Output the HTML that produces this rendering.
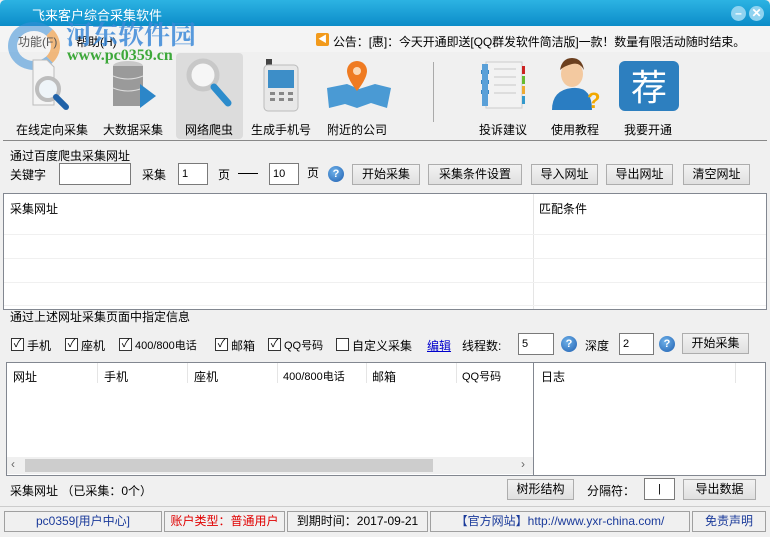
<!DOCTYPE html>
<html><head><meta charset="utf-8"><style>
*{margin:0;padding:0;box-sizing:border-box}
body{width:770px;height:537px;overflow:hidden;background:#f0f0f0;font-family:"Liberation Sans","Noto Sans CJK SC",sans-serif;font-size:12px;color:#000;position:relative}
.a{position:absolute;white-space:nowrap}
.btn{position:absolute;border:1px solid #adadad;background:linear-gradient(#f2f2f2,#e0e0e0);text-align:center;line-height:19px;height:21px;font-size:12px}
.inp{position:absolute;border:1px solid #7a7a7a;background:#fff;height:22px;line-height:20px;padding-left:3px;font-size:11px}
.q{position:absolute;width:16px;height:16px;border-radius:50%;background:radial-gradient(circle at 40% 35%,#6fb2ea,#1f5fb0);color:#fff;font-weight:bold;font-size:11px;text-align:center;line-height:16px}
.cb{position:absolute;width:13px;height:13px;border:1px solid #333;background:#fff;font-size:11px;line-height:11px;text-align:center}
.lbl{position:absolute;font-size:12px;text-align:center;width:90px}
.hl{position:absolute;height:1px;background:#f0f0f0}
.vl{position:absolute;width:1px;background:#e5e5e5}
.ft{position:absolute;top:511px;height:21px;border:1px solid #a0a0a0;background:#f0f0f0;line-height:19px;text-align:center;font-size:12px}
</style></head><body>
<div class="a" style="left:0;top:0;width:770px;height:26px;background:linear-gradient(#2cb3e3,#0c8cc8);border-radius:5px 5px 0 0"></div>
<div class="a" style="left:32px;top:5px;color:#fff;font-size:13px">飞来客户综合采集软件</div>
<div class="a" style="left:731px;top:6px;width:15px;height:15px;border-radius:50%;background:#8fd3f0;color:#fff;font-weight:bold;text-align:center;line-height:14px">–</div>
<div class="a" style="left:749px;top:6px;width:15px;height:15px;border-radius:50%;background:#8fd3f0;color:#fff;font-weight:bold;text-align:center;line-height:15px;font-size:12px">✕</div>
<div class="a" style="left:0;top:26px;width:770px;height:26px;background:#f4f4f4"></div>
<div class="a" style="left:8px;top:22px;width:52px;height:48px;border-radius:50%;border:9px solid #3a8fd8;border-right-color:#f08a1c;opacity:.55"></div>
<div class="a" style="left:18px;top:33px;color:#555">功能(F)</div>
<div class="a" style="left:76px;top:33px">帮助(H)</div>
<div class="a" style="left:66px;top:15px;font-size:26px;font-weight:bold;color:#3c8ad8;opacity:.85;font-family:'Liberation Serif','Noto Serif CJK SC',serif">河东软件园</div>
<div class="a" style="left:67px;top:47px;font-size:16px;font-weight:bold;color:#3da83a;font-family:'Liberation Serif',serif">www.pc0359.cn</div>
<div class="a" style="left:316px;top:33px;width:13px;height:13px;background:#f29a1b;border-radius:2px;color:#fff;font-size:9px;line-height:13px;text-align:center">◀</div>
<div class="a" style="left:333px;top:33px;font-size:12px;letter-spacing:-0.1px">公告：[惠]：今天开通即送[QQ群发软件简洁版]一款！数量有限活动随时结束。</div>
<div class="a" style="left:176px;top:53px;width:67px;height:86px;background:#dcdcdc;border-radius:4px"></div>
<div class="a" style="left:3px;top:140px;width:764px;height:1px;background:#888"></div>
<svg class="a" style="left:0;top:52px" width="770" height="70">
<path d="M33 8h14l7 7v38h-21z" fill="#f4f4f4" stroke="#bbb"/><circle cx="48" cy="37" r="11" fill="#eef4f8" stroke="#bdbdbd" stroke-width="4"/><path d="M56 45l10 10" stroke="#1f62a8" stroke-width="6" stroke-linecap="round"/>
<ellipse cx="128" cy="14" rx="15" ry="5" fill="#c8c8c8"/><rect x="113" y="14" width="30" height="40" fill="#9a9a9a"/><path d="M113 24q15 6 30 0M113 36q15 6 30 0" stroke="#ddd" fill="none"/><path d="M140 32l16 12-16 12z" fill="#2c86c8"/>
<circle cx="203" cy="23" r="14" fill="#f6f6f6" stroke="#c8c8c8" stroke-width="5"/><path d="M214 35l14 16" stroke="#2c8ccc" stroke-width="7" stroke-linecap="round"/>
<rect x="266" y="7" width="6" height="6" fill="#444"/><rect x="264" y="13" width="34" height="46" rx="4" fill="#e8e8e8" stroke="#bbb"/><rect x="268" y="18" width="26" height="18" fill="#3d8ec8"/><g fill="#888"><rect x="270" y="40" width="5" height="3"/><rect x="279" y="40" width="5" height="3"/><rect x="288" y="40" width="5" height="3"/><rect x="270" y="46" width="5" height="3"/><rect x="279" y="46" width="5" height="3"/><rect x="288" y="46" width="5" height="3"/></g>
<path d="M327 36l20-4 12 5 16-5 16 4-4 20-16-5-14 5-12-4-16 4z" fill="#4a9ad4"/><path d="M357 9a10 10 0 0 1 10 10c0 8-10 20-10 20s-10-12-10-20a10 10 0 0 1 10-10z" fill="#ef7b22"/><circle cx="357" cy="19" r="4" fill="#fbd9b6"/>
<rect x="433" y="10" width="1" height="70" fill="#aaa"/>
<rect x="486" y="10" width="36" height="46" fill="#f2f2f2" stroke="#ccc"/><g fill="#3a87c4"><rect x="481" y="18" width="8" height="4"/><rect x="481" y="28" width="8" height="4"/><rect x="481" y="38" width="8" height="4"/></g><rect x="482" y="12" width="6" height="42" fill="#5aa0d8"/><g fill="#ddd"><rect x="494" y="16" width="22" height="2"/><rect x="494" y="24" width="22" height="2"/><rect x="494" y="32" width="22" height="2"/><rect x="494" y="40" width="22" height="2"/></g><rect x="522" y="14" width="3" height="8" fill="#c22"/><rect x="522" y="24" width="3" height="8" fill="#6b3"/><rect x="522" y="34" width="3" height="8" fill="#ea3"/><rect x="522" y="44" width="3" height="8" fill="#39c"/>
<ellipse cx="572" cy="22" rx="11" ry="13" fill="#f3c9a0"/><path d="M560 18q2-12 12-12t12 12q-4-8-12-6t-12 6z" fill="#6b3f1e"/><path d="M552 58q0-20 20-22t20 22z" fill="#2a7dc2"/><text x="587" y="56" font-size="22" font-weight="bold" fill="#f2a900" font-family="Liberation Sans">?</text>
<rect x="619" y="9" width="60" height="50" rx="6" fill="#2d7fbf"/><text x="649" y="48" font-size="36" fill="#fff" text-anchor="middle" font-family="Noto Sans CJK SC">荐</text>
</svg>
<div class="lbl" style="left:7px;top:121px">在线定向采集</div>
<div class="lbl" style="left:88px;top:121px">大数据采集</div>
<div class="lbl" style="left:164px;top:121px">网络爬虫</div>
<div class="lbl" style="left:236px;top:121px">生成手机号</div>
<div class="lbl" style="left:312px;top:121px">附近的公司</div>
<div class="lbl" style="left:458px;top:121px">投诉建议</div>
<div class="lbl" style="left:530px;top:121px">使用教程</div>
<div class="lbl" style="left:603px;top:121px">我要开通</div>
<div class="a" style="left:10px;top:147px">通过百度爬虫采集网址</div>
<div class="a" style="left:10px;top:166px">关键字</div>
<div class="inp" style="left:59px;top:163px;width:72px"></div>
<div class="a" style="left:142px;top:166px">采集</div>
<div class="inp" style="left:178px;top:163px;width:30px">1</div>
<div class="a" style="left:218px;top:166px">页</div>
<div class="a" style="left:238px;top:173px;width:20px;height:1px;background:#000"></div>
<div class="inp" style="left:269px;top:163px;width:30px">10</div>
<div class="a" style="left:307px;top:164px">页</div>
<div class="q" style="left:328px;top:166px">?</div>
<div class="btn" style="left:352px;top:164px;width:68px">开始采集</div>
<div class="btn" style="left:428px;top:164px;width:94px">采集条件设置</div>
<div class="btn" style="left:531px;top:164px;width:67px">导入网址</div>
<div class="btn" style="left:606px;top:164px;width:67px">导出网址</div>
<div class="btn" style="left:683px;top:164px;width:67px">清空网址</div>
<div class="a" style="left:3px;top:193px;width:764px;height:117px;background:#fff;border:1px solid #828790"></div>
<div class="a" style="left:10px;top:200px">采集网址</div>
<div class="a" style="left:539px;top:200px">匹配条件</div>
<div class="vl" style="left:533px;top:194px;height:115px"></div>
<div class="hl" style="left:4px;top:234px;width:762px"></div>
<div class="hl" style="left:4px;top:258px;width:762px"></div>
<div class="hl" style="left:4px;top:282px;width:762px"></div>
<div class="hl" style="left:4px;top:305px;width:762px"></div>
<div class="a" style="left:10px;top:308px">通过上述网址采集页面中指定信息</div>
<div class="cb" style="left:11px;top:338px">✓</div><div class="a" style="left:27px;top:337px">手机</div>
<div class="cb" style="left:65px;top:338px">✓</div><div class="a" style="left:81px;top:337px">座机</div>
<div class="cb" style="left:119px;top:338px">✓</div><div class="a" style="left:135px;top:337px;font-size:11px">400/800电话</div>
<div class="cb" style="left:215px;top:338px">✓</div><div class="a" style="left:231px;top:337px">邮箱</div>
<div class="cb" style="left:268px;top:338px">✓</div><div class="a" style="left:284px;top:337px;font-size:11px">QQ号码</div>
<div class="cb" style="left:336px;top:338px"></div><div class="a" style="left:352px;top:337px">自定义采集</div>
<div class="a" style="left:427px;top:337px;color:#00c;text-decoration:underline">编辑</div>
<div class="a" style="left:462px;top:337px">线程数:</div>
<div class="inp" style="left:518px;top:333px;width:36px">5</div>
<div class="q" style="left:561px;top:336px">?</div>
<div class="a" style="left:585px;top:337px">深度</div>
<div class="inp" style="left:619px;top:333px;width:35px">2</div>
<div class="q" style="left:659px;top:336px">?</div>
<div class="btn" style="left:682px;top:333px;width:67px">开始采集</div>
<div class="a" style="left:6px;top:362px;width:528px;height:114px;background:#fff;border:1px solid #828790"></div>
<div class="a" style="left:533px;top:362px;width:233px;height:114px;background:#fff;border:1px solid #828790"></div>
<div class="a" style="left:13px;top:368px">网址</div>
<div class="a" style="left:104px;top:368px">手机</div>
<div class="a" style="left:194px;top:368px">座机</div>
<div class="a" style="left:283px;top:368px;font-size:11px">400/800电话</div>
<div class="a" style="left:372px;top:368px">邮箱</div>
<div class="a" style="left:462px;top:368px;font-size:11px">QQ号码</div>
<div class="a" style="left:541px;top:368px">日志</div>
<div class="vl" style="left:97px;top:363px;height:20px"></div>
<div class="vl" style="left:187px;top:363px;height:20px"></div>
<div class="vl" style="left:277px;top:363px;height:20px"></div>
<div class="vl" style="left:366px;top:363px;height:20px"></div>
<div class="vl" style="left:456px;top:363px;height:20px"></div>
<div class="vl" style="left:735px;top:363px;height:20px"></div>
<div class="a" style="left:7px;top:457px;width:526px;height:17px;background:#f0f0f0"></div>
<div class="a" style="left:25px;top:459px;width:408px;height:13px;background:#cdcdcd"></div>
<div class="a" style="left:11px;top:457px;color:#666;font-size:12px">‹</div>
<div class="a" style="left:521px;top:457px;color:#666;font-size:12px">›</div>
<div class="a" style="left:10px;top:482px">采集网址 （已采集：0个）</div>
<div class="btn" style="left:507px;top:479px;width:67px">树形结构</div>
<div class="a" style="left:587px;top:482px">分隔符：</div>
<div class="inp" style="left:644px;top:478px;width:31px;text-align:center;padding:0">|</div>
<div class="btn" style="left:683px;top:479px;width:73px">导出数据</div>
<div class="a" style="left:0;top:506px;width:770px;height:1px;background:#ccc"></div>
<div class="ft" style="left:4px;width:158px;color:#1a3a9a">pc0359[用户中心]</div>
<div class="ft" style="left:164px;width:121px;color:#e00000">账户类型：普通用户</div>
<div class="ft" style="left:287px;width:141px">到期时间：2017-09-21</div>
<div class="ft" style="left:430px;width:260px;color:#1a3a9a">【官方网站】http://www.yxr-china.com/</div>
<div class="ft" style="left:692px;width:74px;color:#1a3a9a">免责声明</div>
</body></html>
